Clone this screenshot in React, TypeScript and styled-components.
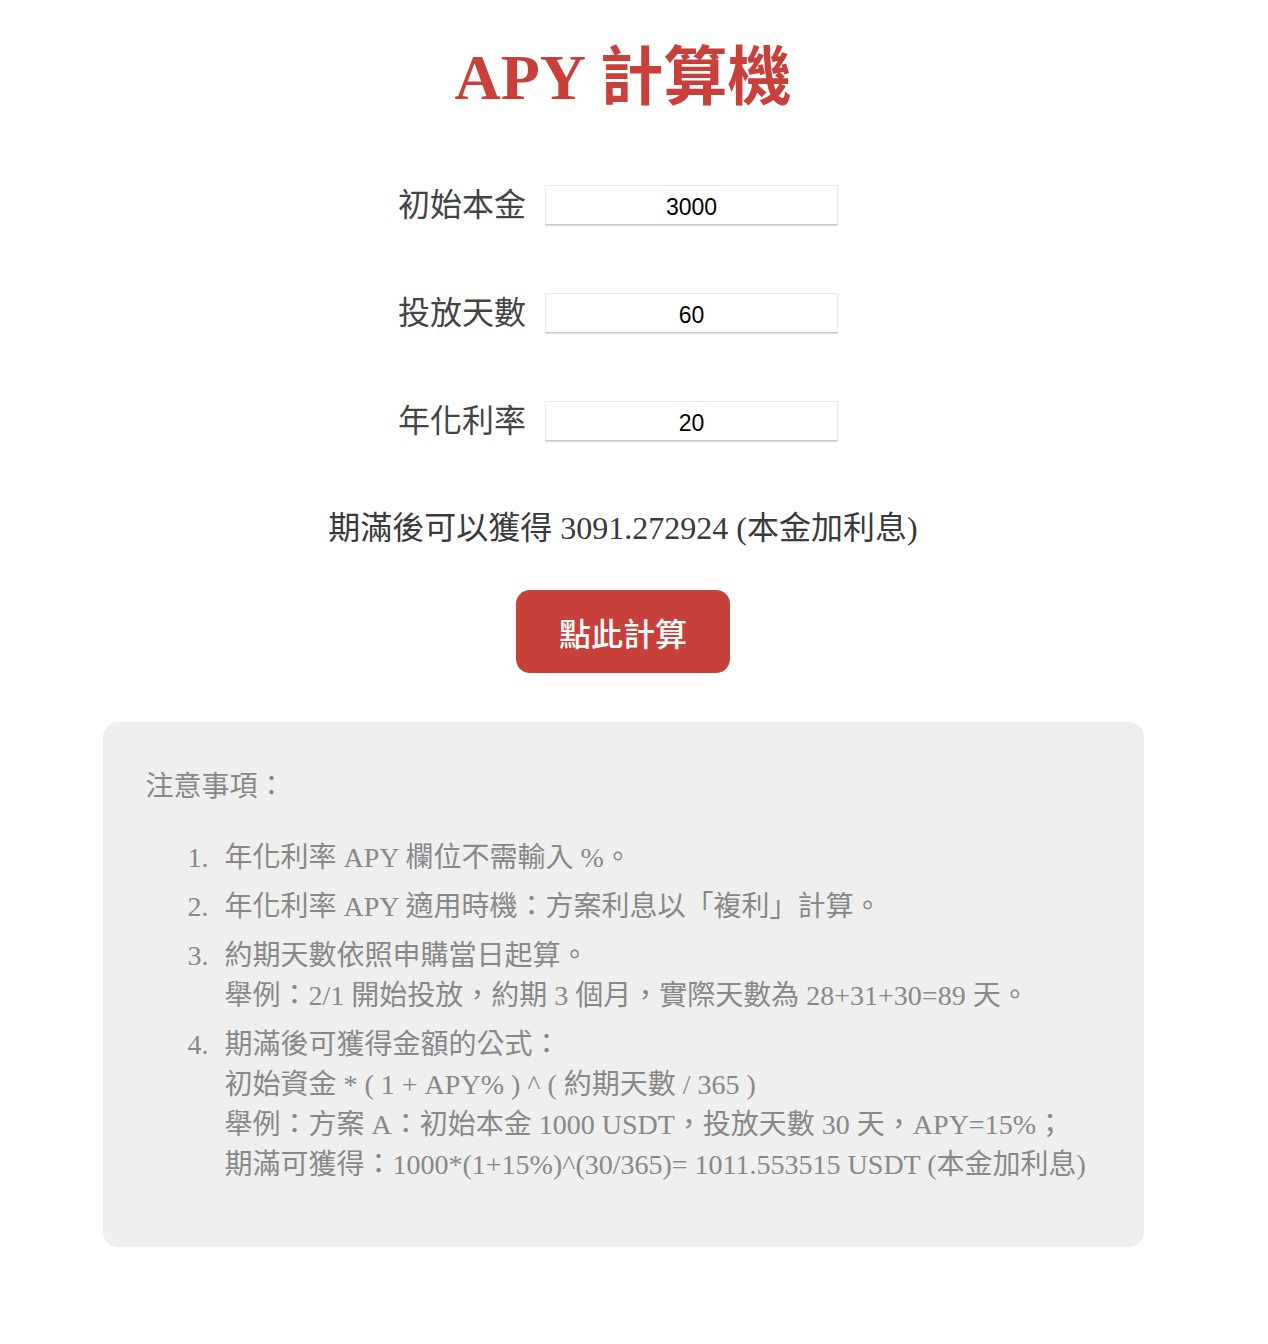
import React, { useState } from "react";
import styled, { createGlobalStyle } from "styled-components";

const GlobalStyle = createGlobalStyle`
  body {
    margin: 0;
    background: #ffffff;
    font-family: "Liberation Serif", "Noto Sans CJK TC", serif;
  }
`;

const Page = styled.main`
  width: 1246px;
  display: flex;
  flex-direction: column;
  align-items: center;
  padding-top: 39px;
  padding-bottom: 96px;
`;

const Title = styled.h1`
  margin: 0;
  font-size: 64px;
  line-height: 77px;
  font-weight: 700;
  color: #c9403a;
`;

const Form = styled.div`
  margin-top: 69px;
  display: flex;
  flex-direction: column;
  gap: 68px;
`;

const Row = styled.label`
  display: flex;
  align-items: center;
  justify-content: center;
  gap: 19px;
  padding-right: 10px;
`;

const Label = styled.span`
  font-size: 32px;
  line-height: 40px;
  color: #444444;
`;

const Input = styled.input`
  box-sizing: border-box;
  width: 293px;
  height: 40px;
  border: 1px solid #ebebeb;
  border-bottom: 1px solid #c9c9c9;
  box-shadow: 0 1px 1px rgba(0, 0, 0, 0.12);
  background: #ffffff;
  text-align: center;
  font-family: "Liberation Sans", Arial, sans-serif;
  font-size: 23px;
  color: #000000;
  outline: none;
  padding: 4px 0 0;
`;

const Result = styled.p`
  margin: 67px 0 0;
  font-size: 32px;
  line-height: 40px;
  color: #3a3a3a;
`;

const Button = styled.button`
  margin-top: 42px;
  width: 214px;
  height: 83px;
  border: none;
  border-radius: 14px;
  background: #c8403a;
  color: #ffffff;
  font-family: "Noto Sans CJK TC", sans-serif;
  font-size: 32px;
  font-weight: 500;
  cursor: pointer;
`;

const Notes = styled.section`
  box-sizing: border-box;
  margin-top: 49px;
  width: 1041px;
  padding: 45px 43px 62px;
  background: #efefef;
  border-radius: 15px;
  color: #888888;
  font-size: 28px;
  line-height: 40px;
`;

const NotesTitle = styled.div``;

const List = styled.ol`
  margin: 31px 0 0;
  padding: 0 0 0 42px;
  list-style: none;
  display: flex;
  flex-direction: column;
  gap: 9px;
`;

const Item = styled.li`
  display: grid;
  grid-template-columns: 37px 1fr;
`;

const Num = styled.span``;

const Lines = styled.div`
  display: flex;
  flex-direction: column;
`;

function calc(p: number, d: number, r: number) {
  return p * Math.pow(1 + r / 100, d / 365);
}

export default function App() {
  const [principal, setPrincipal] = useState("3000");
  const [days, setDays] = useState("60");
  const [rate, setRate] = useState("20");
  const [result, setResult] = useState("3091.272924");

  const onCalc = () => {
    const v = calc(Number(principal), Number(days), Number(rate));
    setResult(v.toFixed(6));
  };

  const notes: string[][] = [
    ["年化利率 APY 欄位不需輸入 %。"],
    ["年化利率 APY 適用時機：方案利息以「複利」計算。"],
    ["約期天數依照申購當日起算。", "舉例：2/1 開始投放，約期 3 個月，實際天數為 28+31+30=89 天。"],
    [
      "期滿後可獲得金額的公式：",
      "初始資金 * ( 1 + APY% ) ^ ( 約期天數 / 365 )",
      "舉例：方案 A：初始本金 1000 USDT，投放天數 30 天，APY=15%；",
      "期滿可獲得：1000*(1+15%)^(30/365)= 1011.553515 USDT (本金加利息)",
    ],
  ];

  return (
    <>
      <GlobalStyle />
      <Page>
        <Title>APY 計算機</Title>
        <Form>
          <Row>
            <Label>初始本金</Label>
            <Input value={principal} onChange={(e) => setPrincipal(e.target.value)} />
          </Row>
          <Row>
            <Label>投放天數</Label>
            <Input value={days} onChange={(e) => setDays(e.target.value)} />
          </Row>
          <Row>
            <Label>年化利率</Label>
            <Input value={rate} onChange={(e) => setRate(e.target.value)} />
          </Row>
        </Form>
        <Result>期滿後可以獲得 {result} (本金加利息)</Result>
        <Button onClick={onCalc}>點此計算</Button>
        <Notes>
          <NotesTitle>注意事項：</NotesTitle>
          <List>
            {notes.map((lines, i) => (
              <Item key={i}>
                <Num>{i + 1}.</Num>
                <Lines>
                  {lines.map((l, j) => (
                    <span key={j}>{l}</span>
                  ))}
                </Lines>
              </Item>
            ))}
          </List>
        </Notes>
      </Page>
    </>
  );
}
